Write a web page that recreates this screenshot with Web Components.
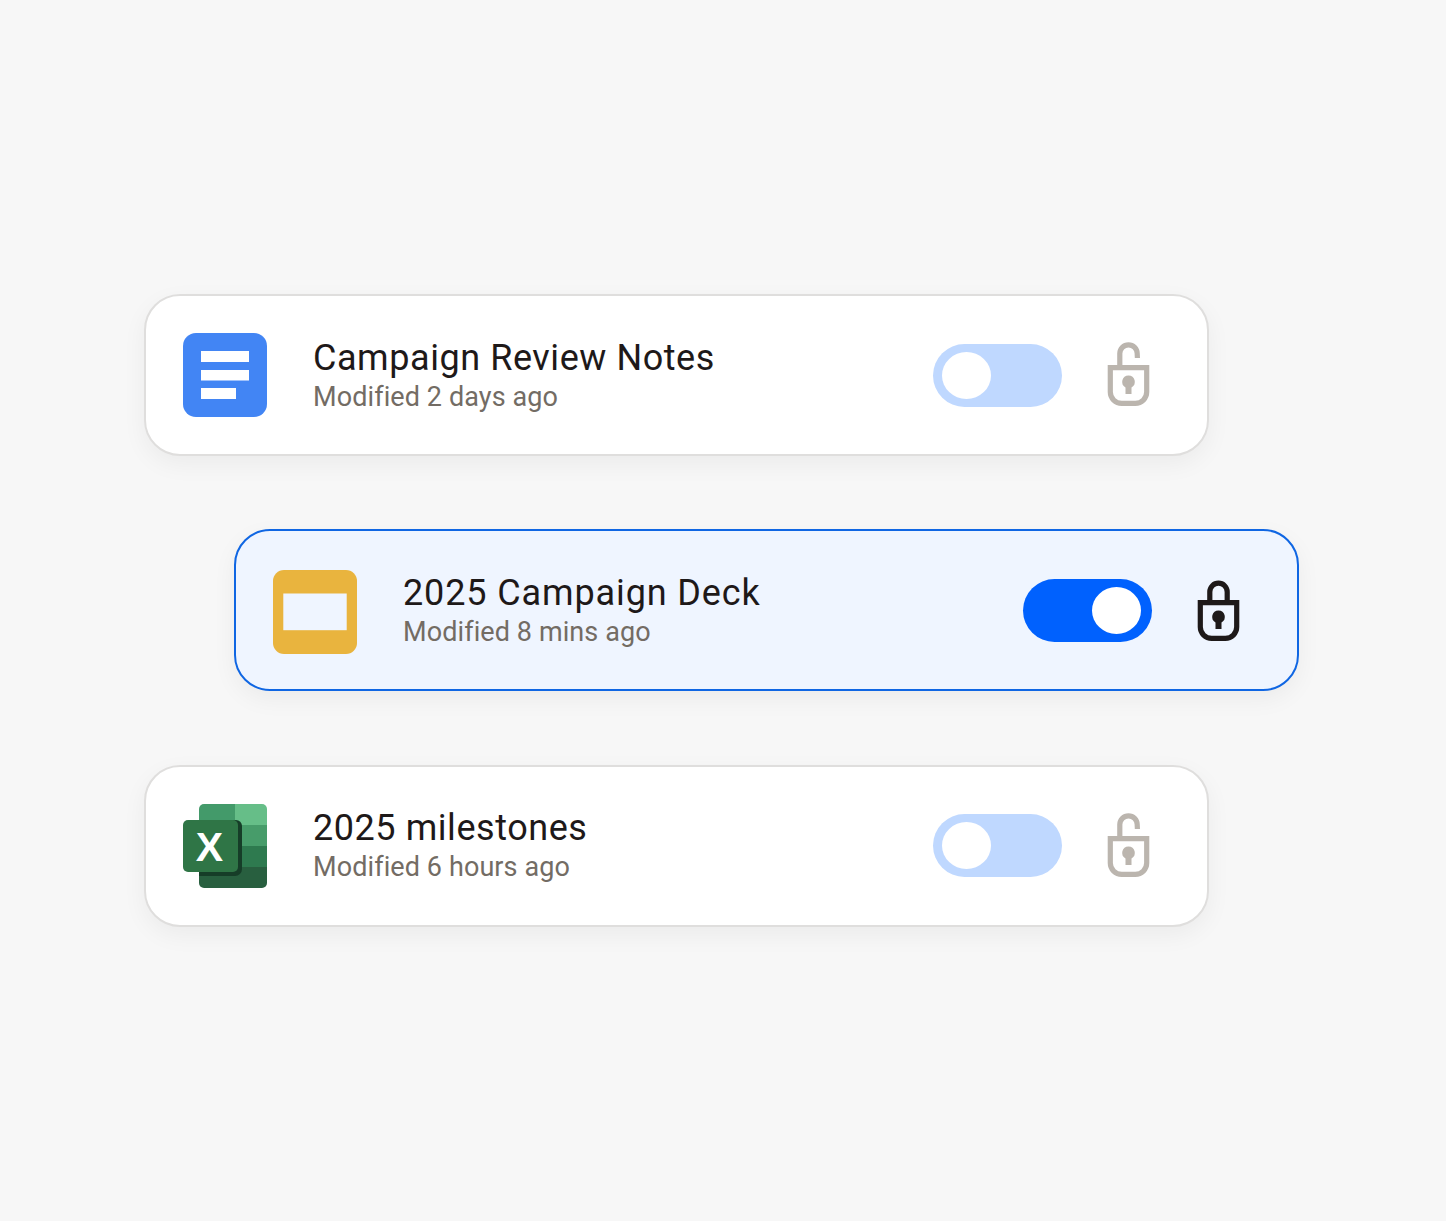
<!DOCTYPE html>
<html><head><meta charset="utf-8"><style>
html,body{margin:0;background:#f7f7f7}
body{font-family:Roboto,"Liberation Sans",sans-serif}
</style></head><body>
<template id="t-page"><style>
:host{display:flex;flex-direction:column;align-items:flex-start;gap:73.250px;box-sizing:border-box;width:1446px;height:1221px;padding:294px 0 0 144.400px;background:#f7f7f7}
</style><slot></slot></template>

<template id="t-card"><style>
:host{display:flex;align-items:center;box-sizing:border-box;width:1065px;height:162px;padding:0 56.600px 0 36.600px;background:#fff;border:2px solid #dfdedd;border-radius:36px;box-shadow:0 8px 24px rgba(0,0,0,.05)}
:host([active]){margin-left:90px;background:#eff5ff;border-color:#0f66e3}
.text{display:flex;flex-direction:column;margin-left:46px;flex:1}
.t{font-size:36px;line-height:40px;letter-spacing:.56px;color:#1e1919}
.s{font-size:27px;line-height:32px;margin-top:3px;letter-spacing:.1px;color:#736c64}
</style>
<slot name="icon"></slot>
<div class="text"><div class="t"><slot name="title"></slot></div><div class="s"><slot name="sub"></slot></div></div>
<slot name="toggle"></slot>
<slot name="lock"></slot></template>

<template id="t-toggle"><style>
:host{display:flex;align-items:center;box-sizing:border-box;width:129px;height:63px;padding:0 8.500px;border-radius:32px;background:#bfd8ff}
:host([on]){background:#0061fe;justify-content:flex-end;padding-right:11px}
i{display:block;width:49px;height:47px;border-radius:50%;background:#fff}
</style><i></i></template>

<template id="t-lock"><style>
:host{display:block;width:44px;height:66px;margin-left:44.500px;color:#bbb5ae}
:host([on]){color:#1e1919}
svg{display:block}
</style><svg width="44" height="66" viewBox="0 0 44 66" fill="none" stroke="currentColor" stroke-width="5.2">
<path d="M3.300 25.600H39.700V50a11.400 11.400 0 0 1-11.400 11.400H14.700A11.400 11.400 0 0 1 3.300 50Z"/>
<path class="sh" d=""/>
<path fill="currentColor" stroke="none" d="M21.500 33.400a6.400 6.400 0 0 1 3 12V52H18.500V45.400a6.400 6.400 0 0 1 3-12Z"/>
</svg></template>

<template id="t-icon"><style>
:host{display:block;width:84px;height:84px;flex:none}
:host([kind=slides]){margin-top:3.500px}
:host([kind=sheets]){margin-top:1px}
svg{display:block}
text{font-family:"Liberation Sans",Arial,sans-serif;font-weight:700;font-size:41px}
</style><div></div></template>

<file-page>
  <file-card>
    <file-icon slot="icon" kind="docs"></file-icon>
    <span slot="title">Campaign Review Notes</span>
    <span slot="sub">Modified 2 days ago</span>
    <file-toggle slot="toggle"></file-toggle>
    <file-lock slot="lock"></file-lock>
  </file-card>
  <file-card active>
    <file-icon slot="icon" kind="slides"></file-icon>
    <span slot="title" style="letter-spacing:.88px">2025 Campaign Deck</span>
    <span slot="sub">Modified 8 mins ago</span>
    <file-toggle slot="toggle" on></file-toggle>
    <file-lock slot="lock" on></file-lock>
  </file-card>
  <file-card>
    <file-icon slot="icon" kind="sheets"></file-icon>
    <span slot="title">2025 milestones</span>
    <span slot="sub">Modified 6 hours ago</span>
    <file-toggle slot="toggle"></file-toggle>
    <file-lock slot="lock"></file-lock>
  </file-card>
</file-page>

<script>
const tpl=id=>document.getElementById(id).content.cloneNode(true);
class Base extends HTMLElement{
  constructor(){super();this.attachShadow({mode:'open'}).appendChild(tpl(this.constructor.tid));}
}
class FilePage extends Base{static tid='t-page'}
class FileCard extends Base{static tid='t-card'}
class FileToggle extends Base{static tid='t-toggle'}
class FileLock extends Base{static tid='t-lock';
  connectedCallback(){
    this.shadowRoot.querySelector('.sh').setAttribute('d',this.hasAttribute('on')
      ?'M12.800 25V14.900a8.700 8.700 0 0 1 17.400 0V25'
      :'M12.800 25V11.600a8.700 8.700 0 0 1 17.400 0L30.400 16');
  }
}
const ICONS={
docs:`<svg width="84" height="84" viewBox="0 0 84 84"><rect width="84" height="84" rx="13" fill="#4285f4"/><g fill="#fff"><rect x="18" y="18" width="48" height="11"/><rect x="18" y="37" width="48" height="10.500"/><rect x="18" y="55" width="35" height="11"/></g></svg>`,
slides:`<svg width="84" height="84" viewBox="0 0 84 84"><rect width="84" height="84" rx="11" fill="#e9b43e"/><rect x="10.300" y="23.500" width="63.400" height="36.700" fill="#eff5ff"/></svg>`,
sheets:`<svg width="84" height="84" viewBox="0 0 84 84"><defs><clipPath id="c"><rect x="16" width="68" height="84" rx="5"/></clipPath></defs>
<g clip-path="url(#c)"><rect x="16" width="36" height="21" fill="#439a6a"/><rect x="52" width="32" height="21" fill="#66be88"/><rect x="16" y="21" width="36" height="21" fill="#2f8154"/><rect x="52" y="21" width="32" height="21" fill="#479c6a"/><rect x="16" y="42" width="68" height="21" fill="#2e7a4f"/><rect x="16" y="63" width="68" height="21" fill="#285f3f"/></g>
<path d="M16 16H53a6 6 0 0 1 6 6V65a7 7 0 0 1-7 7H16Z" fill="#163d28"/>
<rect y="16" width="55" height="52" rx="5" fill="#2f7546"/>
<text x="26.500" y="57" text-anchor="middle" fill="#fff">X</text></svg>`};
class FileIcon extends Base{static tid='t-icon';
  connectedCallback(){this.shadowRoot.querySelector('div').innerHTML=ICONS[this.getAttribute('kind')];}
}
customElements.define('file-page',FilePage);
customElements.define('file-card',FileCard);
customElements.define('file-toggle',FileToggle);
customElements.define('file-lock',FileLock);
customElements.define('file-icon',FileIcon);
</script>
</body></html>
